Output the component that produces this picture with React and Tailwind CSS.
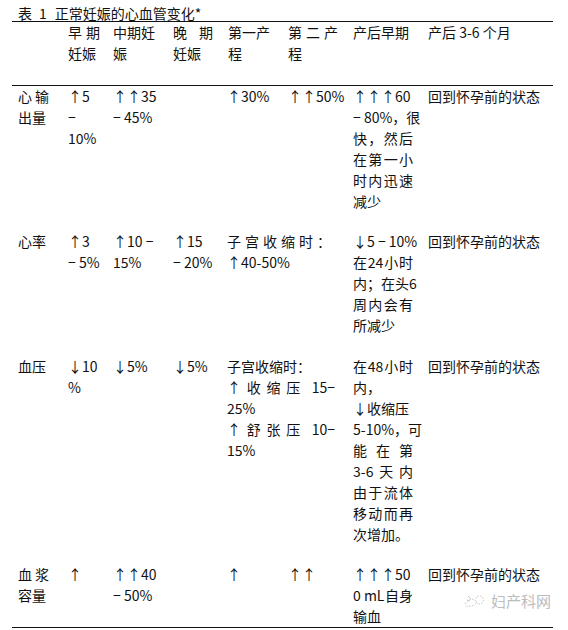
const COLS = 'grid grid-cols-[50px_45px_60px_54px_61px_65px_75px_1fr]';

// a line of text; with `j` the parts are spread over width w
function L({ j, w, children }) {
  if (j) {
    return (
      <div className="flex justify-between h-[21px] leading-[21px] whitespace-nowrap" style={{ width: w }}>
        {children.map((p, i) => (
          <span key={i}>{p}</span>
        ))}
      </div>
    );
  }
  return <div className="h-[21px] leading-[21px] whitespace-nowrap">{children}</div>;
}

function Row({ children, pb }) {
  return <div className={`${COLS} items-start pl-[6px] ${pb}`}>{children}</div>;
}

const BACK = <L>回到怀孕前的状态</L>;

export default function App() {
  return (
    <div
      className="w-[568px] h-[630px] bg-white text-[#111] text-[14px] relative overflow-hidden"
      style={{ fontFamily: '"Noto Sans CJK SC", "Liberation Sans", sans-serif' }}
    >
      <div className="pl-[18px] pt-[3px] h-[21px] leading-[20px] whitespace-nowrap flex">
        <span>表</span>
        <span className="ml-[7px] mr-[8px]">1</span>
        <span>正常妊娠的心血管变化*</span>
      </div>

      <div className="ml-[12px] w-[541px]">
        <div className="border-t border-[#111]" />

        {/* header */}
        <Row pb="pb-[21px]">
          <div />
          <div>
            <L j w={32}>{['早', '期']}</L>
            <L>妊娠</L>
          </div>
          <div>
            <L>中期妊</L>
            <L>娠</L>
          </div>
          <div>
            <L j w={40}>{['晚', '期']}</L>
            <L>妊娠</L>
          </div>
          <div className="pl-[1px]">
            <L>第一产</L>
            <L>程</L>
          </div>
          <div>
            <L j w={50}>{['第', '二', '产']}</L>
            <L>程</L>
          </div>
          <div>
            <L>产后早期</L>
          </div>
          <div>
            <L>产后 3-6 个月</L>
          </div>
        </Row>

        <div className="border-t border-[#111]" />

        {/* 心输出量 */}
        <Row pb="pb-[19px]">
          <div>
            <L j w={31}>{['心', '输']}</L>
            <L>出量</L>
          </div>
          <div>
            <L>↑5</L>
            <L>−</L>
            <L>10%</L>
          </div>
          <div>
            <L>↑↑35</L>
            <L>− 45%</L>
          </div>
          <div />
          <div>
            <L>↑30%</L>
          </div>
          <div>
            <L>↑↑50%</L>
          </div>
          <div>
            <L>↑↑↑60</L>
            <L>− 80%，很</L>
            <L j w={60}>{['快', '，', '然', '后']}</L>
            <L j w={60}>{['在', '第', '一', '小']}</L>
            <L j w={60}>{['时', '内', '迅', '速']}</L>
            <L>减少</L>
          </div>
          <div>{BACK}</div>
        </Row>

        {/* 心率 */}
        <Row pb="pb-[20px]">
          <div>
            <L>心率</L>
          </div>
          <div>
            <L>↑3</L>
            <L>− 5%</L>
          </div>
          <div>
            <L>↑10 −</L>
            <L>15%</L>
          </div>
          <div>
            <L>↑15</L>
            <L>− 20%</L>
          </div>
          <div className="col-span-2">
            <L j w={104}>{['子', '宫', '收', '缩', '时', '：']}</L>
            <L>↑40-50%</L>
          </div>
          <div>
            <L>↓5 − 10%</L>
            <L j w={60}>{['在', '24', '小', '时']}</L>
            <L j w={61}>{['内；', '在', '头', '6']}</L>
            <L j w={60}>{['周', '内', '会', '有']}</L>
            <L>所减少</L>
          </div>
          <div>{BACK}</div>
        </Row>

        {/* 血压 */}
        <Row pb="pb-[19px]">
          <div>
            <L>血压</L>
          </div>
          <div>
            <L>↓10</L>
            <L>%</L>
          </div>
          <div>
            <L>↓5%</L>
          </div>
          <div>
            <L>↓5%</L>
          </div>
          <div className="col-span-2">
            <L>子宫收缩时：</L>
            <L j w={108}>{['↑', '收', '缩', '压', '', '15−']}</L>
            <L>25%</L>
            <L j w={108}>{['↑', '舒', '张', '压', '', '10−']}</L>
            <L>15%</L>
          </div>
          <div>
            <L j w={60}>{['在', '48', '小', '时']}</L>
            <L>内，</L>
            <L>↓收缩压</L>
            <L j w={60}>{['5-10%，', '可']}</L>
            <L j w={60}>{['能', '在', '第']}</L>
            <L j w={60}>{['3-6', '天', '内']}</L>
            <L j w={60}>{['由', '于', '流', '体']}</L>
            <L j w={60}>{['移', '动', '而', '再']}</L>
            <L>次增加。</L>
          </div>
          <div>{BACK}</div>
        </Row>

        {/* 血浆容量 */}
        <Row pb="pb-0">
          <div>
            <L j w={31}>{['血', '浆']}</L>
            <L>容量</L>
          </div>
          <div>
            <L>↑</L>
          </div>
          <div>
            <L>↑↑40</L>
            <L>− 50%</L>
          </div>
          <div />
          <div>
            <L>↑</L>
          </div>
          <div>
            <L>↑↑</L>
          </div>
          <div>
            <L>↑↑↑50</L>
            <L j w={60}>{['0 mL', '自身']}</L>
            <L>输血</L>
          </div>
          <div>{BACK}</div>
        </Row>

        <div className="border-t border-[#111]" />
      </div>

      {/* watermark */}
      <div className="absolute left-[463px] top-[590px] flex items-center gap-[6px] text-[#bcbcbc] text-[15px]">
        <svg width="22" height="18" viewBox="0 0 22 18" fill="none" stroke="#c8c8c8" strokeWidth="1">
          <path d="M2 12 C6 6 11 6 14 10" strokeDasharray="1.5 1.5" />
          <path d="M3 14 C7 15 11 14 14 10" strokeDasharray="1.5 1.5" />
          <circle cx="16.5" cy="8" r="4" strokeDasharray="1.5 1.2" />
          <path d="M5 4 L8 7 M4 8 L7 9" />
        </svg>
        <span>妇产科网</span>
      </div>
    </div>
  );
}
